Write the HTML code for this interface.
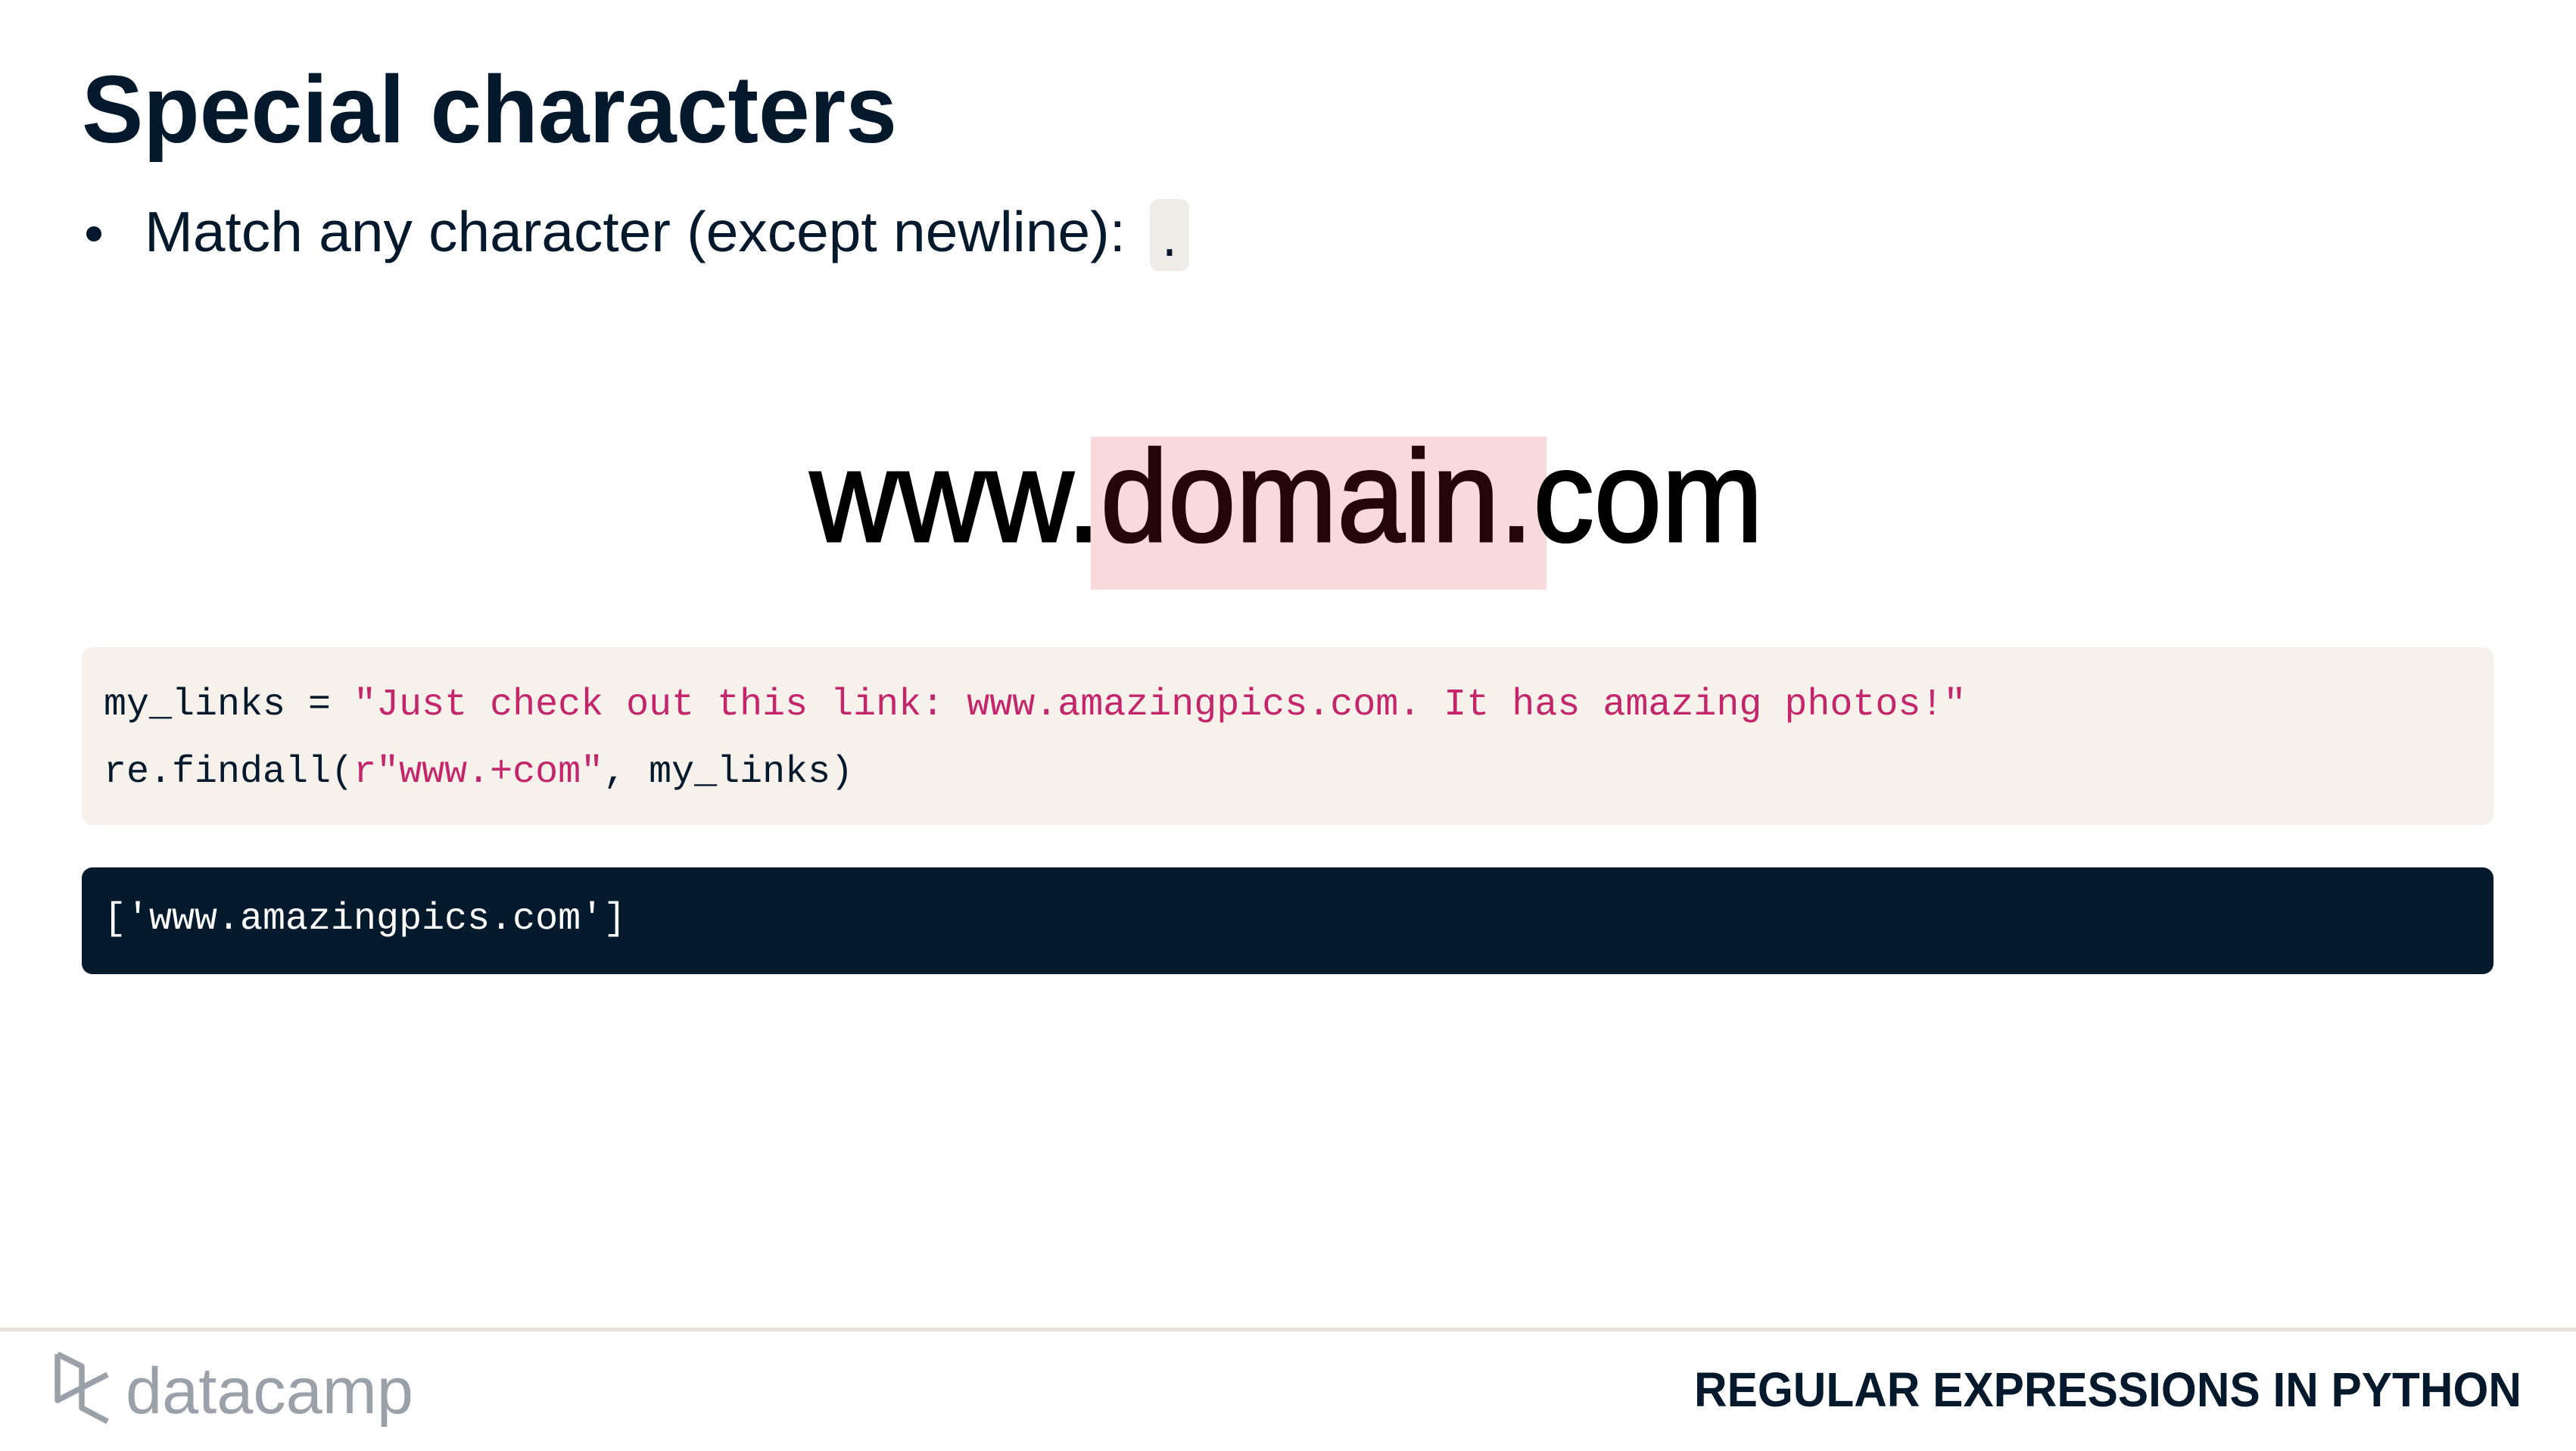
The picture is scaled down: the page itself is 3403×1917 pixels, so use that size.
<!DOCTYPE html>
<html><head><meta charset="utf-8">
<style>
html,body{margin:0;padding:0;background:#fff;}
body{width:3403px;height:1917px;position:relative;overflow:hidden;font-family:"Liberation Sans",sans-serif;color:#05192d;}
.abs{position:absolute;}
.code{font-family:"Liberation Mono",monospace;font-size:50px;white-space:pre;}
.s{color:#c3266b;}
</style></head><body>
<svg class="abs" style="left:0;top:0" width="3403" height="1917">
  <text x="108" y="188" font-family="Liberation Sans" font-weight="bold" font-size="126" fill="#05192d" textLength="1077" lengthAdjust="spacingAndGlyphs">Special characters</text>
  <circle cx="124" cy="309" r="10" fill="#05192d"/>
  <text x="191" y="332" font-family="Liberation Sans" font-size="75" fill="#05192d" textLength="1296" lengthAdjust="spacingAndGlyphs">Match any character (except newline):</text>
  <rect x="1519" y="263" width="52" height="95" rx="12" fill="#efebe6"/>
  <text x="1545" y="338" font-family="Liberation Mono" font-size="60" fill="#05192d" text-anchor="middle">.</text>
  <rect x="1441" y="577" width="602" height="202" fill="#f9d9dc"/>
  <text x="1070" y="715" font-family="Liberation Sans" font-size="172" fill="#000" stroke="#000" stroke-width="3" textLength="1259" lengthAdjust="spacingAndGlyphs">www.<tspan fill="#250508" stroke="#250508">domain.</tspan>com</text>
  <rect x="108" y="855" width="3186" height="235" rx="14" fill="#f6f1ea"/>
  <rect x="108" y="1146" width="3186" height="141" rx="14" fill="#051a2d"/>
  <rect x="0" y="1754" width="3403" height="5" fill="#e5e0da"/>
  <g fill="none" stroke="#9aa1a8" stroke-width="7.5" stroke-linejoin="round" stroke-linecap="butt">
    <path d="M76 1789 L76 1850 L142 1816"/>
    <path d="M76 1789 L108 1805 L108 1860 L142 1878"/>
  </g>
  <text x="166" y="1867" font-family="Liberation Sans" font-size="86" fill="#9aa1a8" textLength="380" lengthAdjust="spacingAndGlyphs">datacamp</text>
  <text x="2238" y="1858" font-family="Liberation Sans" font-weight="bold" font-size="64" fill="#05192d" textLength="1093" lengthAdjust="spacingAndGlyphs">REGULAR EXPRESSIONS IN PYTHON</text>
</svg>
<div class="abs code" style="left:137px;top:887px;line-height:89px;">my_links = <span class="s">"Just check out this link: www.amazingpics.com. It has amazing photos!"</span>
re.findall(<span class="s">r"www.+com"</span>, my_links)</div>
<div class="abs code" style="left:137px;top:1185px;line-height:60px;color:#fff;">['www.amazingpics.com']</div>
</body></html>
